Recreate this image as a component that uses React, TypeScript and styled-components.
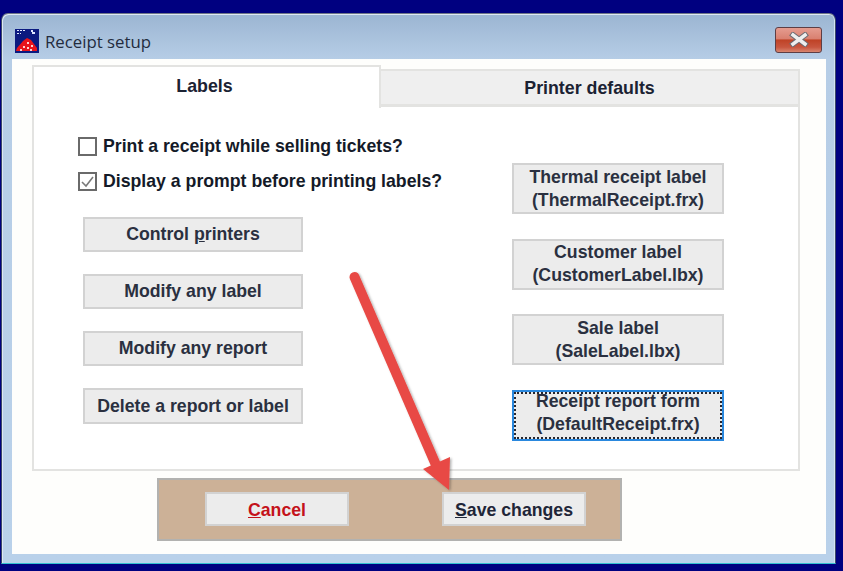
import styled, {createGlobalStyle} from "styled-components";

const GlobalStyle = createGlobalStyle`
  html, body {
    margin: 0;
    padding: 0;
    height: 100%;
    overflow: hidden;
    background: #000080;
    font-family: "Liberation Sans", Arial, sans-serif;
  }
`

const Desktop = styled.div`
  position: relative;
  width: 843px;
  height: 571px;
  padding: 13px 7px 0 1px;
  box-sizing: border-box;
  background: #000080;
`

const Win = styled.div`
  width: 835px;
  height: 551px;
  box-sizing: border-box;
  display: flex;
  flex-direction: column;
  border: 1px solid #3c4a68;
  border-top-color: #6d7688;
  border-bottom: 1px solid #35c0d0;
  border-radius: 7px 7px 0 0;
  box-shadow: inset 1px 1px 0 #dfe8f2, inset -1px 0 0 #d4e4f4;
  background: linear-gradient(180deg, #9bb5d2 0%, #b6cde6 45px, #b9d1ea 100%);
  padding: 0 9px 9px 10px;
`

const TitleBar = styled.div`
  height: 45px;
  flex: none;
  display: flex;
  align-items: center;
  padding: 8px 0 0 3px;
  box-sizing: border-box;
`

const TitleIcon = styled.svg`
  width: 24px;
  height: 24px;
  flex: none;
  margin-right: 6px;
`

const TitleText = styled.span`
  font-family: "Open Sans", "Liberation Sans", sans-serif;
  font-size: 16.8px;
  color: #232c3e;
  margin-top: 2px;
`

const CloseButton = styled.div`
  margin: 0 4px 2px auto;
  width: 47px;
  height: 26px;
  box-sizing: border-box;
  display: flex;
  align-items: center;
  justify-content: center;
  border: 1px solid #5e3e44;
  border-radius: 3px;
  background: linear-gradient(180deg, #e59c90 0%, #d98070 45%, #bf4226 50%, #c8563f 80%, #d98670 100%);
`

const Client = styled.div`
  flex: 1;
  background: #fefefc;
  padding: 6px 26px 0 20px;
  display: flex;
  flex-direction: column;
`

const TabStrip = styled.div`
  display: flex;
  align-items: flex-end;
  height: 41px;
  flex: none;
`

const Tab = styled.div<{$active?: boolean}>`
  box-sizing: border-box;
  display: flex;
  justify-content: center;
  font-weight: bold;
  font-size: 17.8px;
  color: #1b2233;
  border: 2px solid #e3e3e1;
  border-bottom: ${p => (p.$active ? "none" : "2px solid #e3e3e1")};
  border-left: ${p => (p.$active ? "2px solid #e3e3e1" : "none")};
  background: ${p => (p.$active ? "#fff" : "#efefef")};
  height: ${p => (p.$active ? "43px" : "37px")};
  width: ${p => (p.$active ? "349px" : "419px")};
  padding: ${p => (p.$active ? "9px 4px 0 0" : "7px 0 0 0")};
  margin-bottom: ${p => (p.$active ? "-2px" : "0")};
  position: relative;
  z-index: ${p => (p.$active ? 1 : 0)};
`

const Panel = styled.div`
  box-sizing: border-box;
  width: 768px;
  height: 365px;
  flex: none;
  background: #fff;
  border: 2px solid #e3e3e1;
  border-top-width: 1px;
  display: flex;
  justify-content: space-between;
  padding: 30px 74px 0 44px;
`

const LeftColumn = styled.div`
  display: flex;
  flex-direction: column;
`

const CheckRow = styled.div`
  display: flex;
  align-items: center;
  height: 19px;
  margin-bottom: 16px;
  font-weight: bold;
  font-size: 17.7px;
  color: #141a28;
  gap: 6px;
`

const CheckBox = styled.div`
  width: 19px;
  height: 19px;
  box-sizing: border-box;
  border: 2px solid #6a6a6a;
  background: #fff;
  flex: none;
  display: flex;
  align-items: center;
  justify-content: center;
`

const LeftButtons = styled.div`
  display: flex;
  flex-direction: column;
  gap: 22px;
  margin: 10px 0 0 5px;
`

const RightButtons = styled.div`
  display: flex;
  flex-direction: column;
  gap: 24.6px;
  padding-top: 26px;
`

const FormButton = styled.div<{$w: number; $h: number; $focus?: boolean}>`
  position: relative;
  box-sizing: border-box;
  width: ${p => p.$w}px;
  height: ${p => p.$h}px;
  display: flex;
  align-items: center;
  justify-content: center;
  text-align: center;
  white-space: pre-line;
  font-weight: bold;
  font-size: 17.7px;
  line-height: 23px;
  color: #2a3040;
  background: #ececec;
  border: ${p => (p.$focus ? "2px solid #2a88de" : "2px solid #d2d2d2")};
  ${p => p.$focus && `
    outline: 2px dotted #26262e;
    outline-offset: -4px;
    padding-bottom: 4px;
  `}
`

const Key = styled.span`
  text-decoration: underline;
`

const BottomBar = styled.div`
  box-sizing: border-box;
  width: 465px;
  height: 63px;
  flex: none;
  margin: 7px 0 0 125px;
  background: #ccb197;
  border: 2px solid #b2b2b0;
  display: flex;
  align-items: center;
  gap: 93px;
  padding: 0 0 1px 46px;
`

const ActionButton = styled(FormButton)<{$red?: boolean}>`
  color: ${p => (p.$red ? "#c4121a" : "#1f2638")};
  padding-top: 2px;
`

const Arrow = styled.svg`
  position: absolute;
  left: 340px;
  top: 260px;
  width: 130px;
  height: 240px;
  pointer-events: none;
`

const TicketIcon = () => (
  <TitleIcon viewBox="0 0 24 24">
    <rect width="24" height="24" fill="#0b1a80"/>
    <path d="M2 1h2v1H2zM5 1h2v1H5zM8 1h2v1H8zM2 4h2v1H2zM5 4h1v1H5z" fill="#dfe6ff"/>
    <path d="M16 1h2v2h2v2h-3V3h-1z" fill="#dfe6ff"/>
    <path d="M1 22 L2 19 L8 12 L12 9 L16 11 L22 19 L22 22 Z" fill="#e8141c"/>
    <path d="M8 17h2v2H8zM12 13h2v2h-2zM12 18h2v2h-2zM16 16h2v2h-2zM5 20h2v2H5zM15 20h2v2h-2z" fill="#ffd0d0"/>
  </TitleIcon>
)

export default function App() {
  return (
    <Desktop>
      <GlobalStyle/>
      <Win>
        <TitleBar>
          <TicketIcon/>
          <TitleText>Receipt setup</TitleText>
          <CloseButton>
            <svg width="20" height="15" viewBox="0 0 20 15">
              <path d="M4 3 L16 12 M16 3 L4 12" stroke="#6a6a72" strokeWidth="5.5" strokeLinecap="square"/>
              <path d="M4 3 L16 12 M16 3 L4 12" stroke="#eeeeee" strokeWidth="3.5" strokeLinecap="square"/>
            </svg>
          </CloseButton>
        </TitleBar>
        <Client>
          <TabStrip>
            <Tab $active>Labels</Tab>
            <Tab>Printer defaults</Tab>
          </TabStrip>
          <Panel>
            <LeftColumn>
              <CheckRow>
                <CheckBox/>
                Print a receipt while selling tickets?
              </CheckRow>
              <CheckRow>
                <CheckBox>
                  <svg width="15" height="15" viewBox="0 0 15 15">
                    <path d="M2 8 L6 12 L13 3" fill="none" stroke="#7a7a7a" strokeWidth="1.6"/>
                  </svg>
                </CheckBox>
                Display a prompt before printing labels?
              </CheckRow>
              <LeftButtons>
                <FormButton $w={220} $h={35}><span>Control <Key>p</Key>rinters</span></FormButton>
                <FormButton $w={220} $h={35}>Modify any label</FormButton>
                <FormButton $w={220} $h={35}>Modify any report</FormButton>
                <FormButton $w={220} $h={36}>Delete a report or label</FormButton>
              </LeftButtons>
            </LeftColumn>
            <RightButtons>
              <FormButton $w={212} $h={51}>{"Thermal receipt label\n(ThermalReceipt.frx)"}</FormButton>
              <FormButton $w={212} $h={51}>{"Customer label\n(CustomerLabel.lbx)"}</FormButton>
              <FormButton $w={212} $h={51}>{"Sale label\n(SaleLabel.lbx)"}</FormButton>
              <FormButton $w={212} $h={51} $focus>{"Receipt report form\n(DefaultReceipt.frx)"}</FormButton>
            </RightButtons>
          </Panel>
          <BottomBar>
            <ActionButton $w={144} $h={34} $red><span><Key>C</Key>ancel</span></ActionButton>
            <ActionButton $w={144} $h={34}><span><Key>S</Key>ave changes</span></ActionButton>
          </BottomBar>
        </Client>
      </Win>
      <Arrow viewBox="0 0 130 240">
        <defs>
          <filter id="arrowShadow" x="-20%" y="-10%" width="140%" height="120%">
            <feDropShadow dx="1.5" dy="1" stdDeviation="1.2" floodColor="#000" floodOpacity="0.3"/>
          </filter>
        </defs>
        <g filter="url(#arrowShadow)">
          <path d="M14.5 17 L96 205" stroke="#e84a45" strokeWidth="10" strokeLinecap="round"/>
          <path d="M83 209 L110 197 L109 230 Z" fill="#e84a45"/>
        </g>
      </Arrow>
    </Desktop>
  )
}
